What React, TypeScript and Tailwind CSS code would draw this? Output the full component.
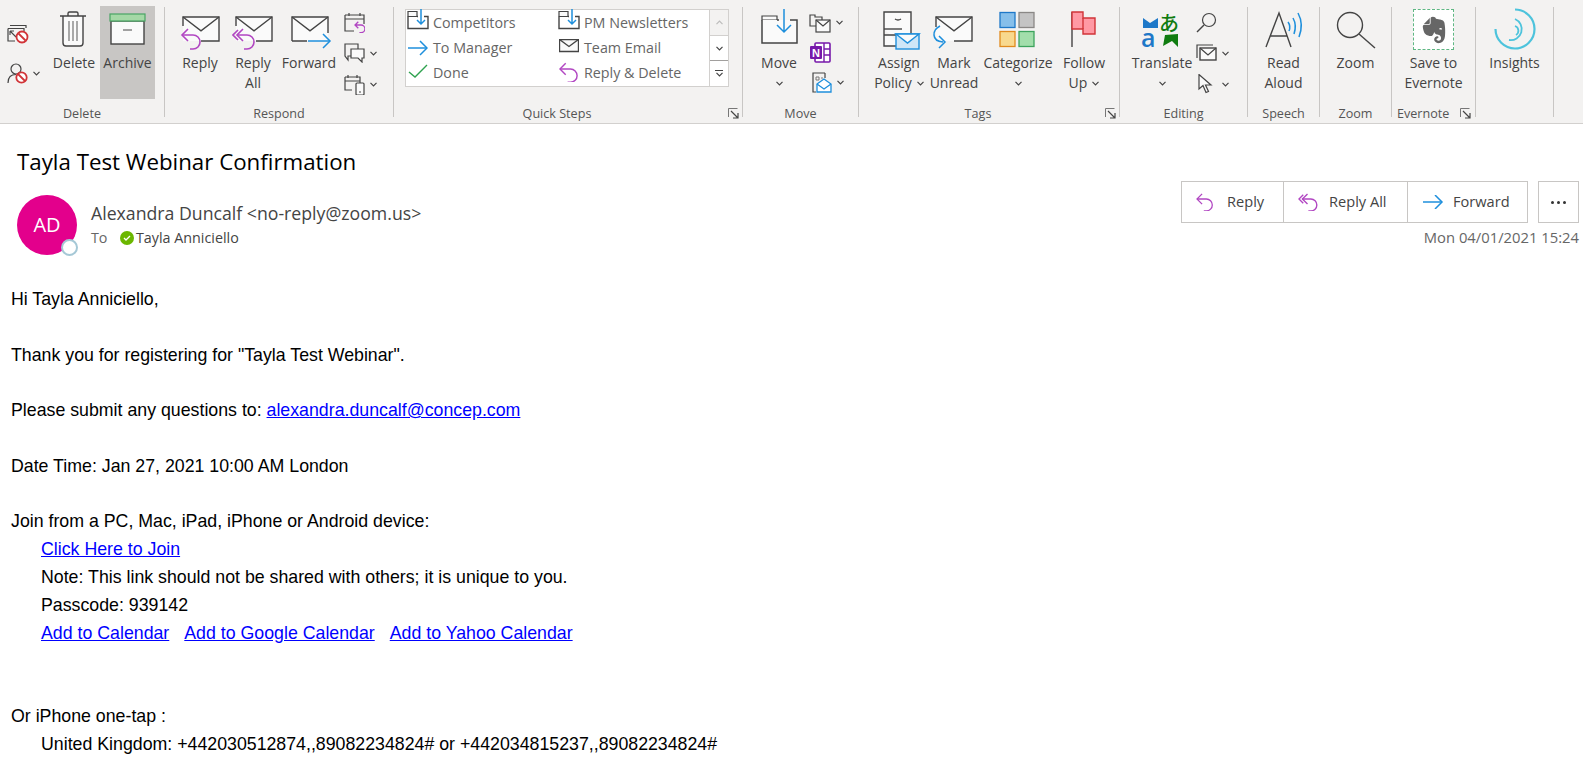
import React from 'react';
import { FaEvernote } from 'react-icons/fa';

const DARK = '#444444';
const PURPLE = '#b146c2';
const BLUE = '#1e8fdc';

const Chev = ({ className = '' }: { className?: string }) => (
  <svg width="7" height="5" viewBox="0 0 7 5" className={className}>
    <polyline points="0.5,0.8 3.5,3.8 6.5,0.8" fill="none" stroke="#444" strokeWidth="1.2" />
  </svg>
);

// shared envelope, x/y is the top left corner
const Env = ({ x, y, w = 36, h = 24, d }: { x: number; y: number; w?: number; h?: number; d?: string }) => (
  <g>
    <rect x={x} y={y} width={w} height={h} fill="#fafafa" stroke="none" />
    <path d={d || `M${x} ${y}H${x + w}V${y + h}H${x}Z`} fill="none" stroke={DARK} strokeWidth="1.4" />
    <path d={`M${x} ${y}L${x + w / 2} ${y + h * 0.58}L${x + w} ${y}`} fill="none" stroke={DARK} strokeWidth="1.4" />
  </g>
);

const Big = ({
  w,
  lines,
  icon,
  chev,
  className = '',
}: {
  w: number;
  lines: React.ReactNode[];
  icon: React.ReactNode;
  chev?: boolean;
  className?: string;
}) => (
  <div className={`flex flex-col items-center shrink-0 ${className}`} style={{ width: w }}>
    <div className="h-[46px] w-full">{icon}</div>
    {lines.map((l, i) => (
      <div key={i} className="leading-[20px] whitespace-nowrap flex items-center gap-[5px]">
        {l}
      </div>
    ))}
    {chev && (
      <div className="h-[20px] flex items-center">
        <Chev />
      </div>
    )}
  </div>
);

const Launcher = ({ className = '' }: { className?: string }) => (
  <svg width="11" height="11" viewBox="0 0 11 11" className={`absolute ${className}`}>
    <path d="M0.5 9V0.5H9.5" fill="none" stroke="#777" strokeWidth="1" />
    <path d="M3 3L9.5 9.5M10 5V10H5" fill="none" stroke="#444" strokeWidth="1.2" />
  </svg>
);

const Group = ({
  w,
  label,
  children,
  launcher,
  labelClass = 'justify-center',
}: {
  w: number;
  label: string;
  children: React.ReactNode;
  launcher?: string;
  labelClass?: string;
}) => (
  <div className="relative shrink-0 h-[110px] mt-[7px] border-r border-[#c8c6c4]" style={{ width: w }}>
    <div className="flex h-[99px] items-start">{children}</div>
    <div className={`flex h-[16px] text-[12.6px] leading-[16px] text-[#555] ${labelClass}`}>{label}</div>
    {launcher && <Launcher className={launcher} />}
  </div>
);

const SmallRow = ({ icon, chev }: { icon: React.ReactNode; chev?: boolean }) => (
  <div className="flex items-center gap-[5px] h-[20px]">
    {icon}
    {chev && <Chev />}
  </div>
);

const ReplyArrow = ({ x, y, s = 1, color = PURPLE, w = 1.6 }: { x: number; y: number; s?: number; color?: string; w?: number }) => (
  <g transform={`translate(${x} ${y}) scale(${s})`} fill="none" stroke={color} strokeWidth={w}>
    <path d="M6 -6L0 0L6 6" />
    <path d="M0 0H11a7 7 0 0 1 0 14H8" />
  </g>
);

const DoubleReply = ({ x, y, s = 1 }: { x: number; y: number; s?: number }) => (
  <g transform={`translate(${x} ${y}) scale(${s})`} fill="none" stroke={PURPLE} strokeWidth="1.6">
    <path d="M5 -5L0 0L5 5" />
    <path d="M10 -6L4 0L10 6" />
    <path d="M4 0H14a7 7 0 0 1 0 14H11" />
  </g>
);

const ForwardArrow = ({ x, y, len = 22 }: { x: number; y: number; len?: number }) => (
  <g transform={`translate(${x} ${y})`} fill="none" stroke={BLUE} strokeWidth="1.5">
    <path d={`M0 0H${len}`} />
    <path d={`M${len - 7} -7L${len} 0L${len - 7} 7`} />
  </g>
);

const FolderDown = () => (
  <svg width="22" height="24" viewBox="0 0 22 24" className="shrink-0 -mt-[6px] -ml-[1px]">
    <path d="M1 3.5H10V8.5H1Z" fill="#fafafa" stroke={DARK} strokeWidth="1.2" />
    <path d="M10 8.5H11M17 8.5H21V20.5H1V8.5" fill="none" stroke={DARK} strokeWidth="1.4" />
    <path d="M14 1V16M10 12L14 16L18 12" fill="none" stroke={BLUE} strokeWidth="1.5" />
  </svg>
);

const Row = ({ icon, label }: { icon: React.ReactNode; label: string }) => (
  <div className="flex items-center h-[25px]">
    <div className="w-[25px] h-[20px] flex items-center">{icon}</div>
    <span className="text-[14.3px] text-[#666] whitespace-nowrap">{label}</span>
  </div>
);

const Ribbon = () => (
  <div className="flex h-[124px] bg-[#f3f2f1] border-b border-[#d2d0ce] text-[14px] text-[#444] shrink-0">
    <Group w={165} label="Delete">
      <div className="w-[44px] ml-[7px] pt-[17px] flex flex-col gap-[19px] shrink-0">
        <SmallRow
          icon={
            <svg width="22" height="20" viewBox="0 0 22 20">
              <path d="M3 1.5H19V4M1 4.5H17V7" fill="none" stroke={DARK} strokeWidth="1.2" />
              <path d="M1 4.5V17H8" fill="none" stroke={DARK} strokeWidth="1.2" />
              <path d="M3 7L9 13M3 7V11M3 7H7" fill="none" stroke={DARK} strokeWidth="1.1" />
              <circle cx="15" cy="13" r="5.5" fill="#fff" stroke="#d13438" strokeWidth="1.8" />
              <path d="M11.5 9.5L18.5 16.5" stroke="#d13438" strokeWidth="1.8" />
            </svg>
          }
        />
        <SmallRow
          chev
          icon={
            <svg width="21" height="21" viewBox="0 0 21 21">
              <circle cx="9" cy="6" r="5" fill="none" stroke={DARK} strokeWidth="1.2" />
              <path d="M1 20C1 14 4 11.5 9 11.5" fill="none" stroke={DARK} strokeWidth="1.2" />
              <circle cx="14.5" cy="14.5" r="5.2" fill="#fff" stroke="#d13438" strokeWidth="1.8" />
              <path d="M11 11L18 18" stroke="#d13438" strokeWidth="1.8" />
            </svg>
          }
        />
      </div>
      <Big
        w={46}
        lines={['Delete']}
        icon={
          <svg width="46" height="46" viewBox="0 0 46 46">
            <path d="M12 9V36q0 3 3 3H29q3 0 3-3V9" fill="#fafafa" stroke={DARK} strokeWidth="1.4" />
            <path d="M9 9H35M17 9V6.5q0-1.5 1.5-1.5h7q1.5 0 1.5 1.5V9" fill="none" stroke={DARK} strokeWidth="1.4" />
            <path d="M18 14V34M22 14V34M26 14V34" stroke="#666" strokeWidth="1.1" />
          </svg>
        }
      />
      <Big
        w={55}
        className="ml-[3px] bg-[#c8c6c4] h-[93px] -mt-[1px] pt-[1px]"
        lines={['Archive']}
        icon={
          <svg width="55" height="46" viewBox="0 0 55 46">
            <rect x="11" y="14" width="33" height="23" fill="#fafafa" stroke={DARK} strokeWidth="1.4" />
            <rect x="10" y="7" width="35" height="7" fill="#a4d8a6" stroke="#4aa564" strokeWidth="1.2" />
            <path d="M23 23H32" stroke="#666" strokeWidth="1.2" />
          </svg>
        }
      />
    </Group>

    <Group w={229} label="Respond">
      <Big
        w={42}
        className="ml-[14px]"
        lines={['Reply']}
        icon={
          <svg width="42" height="46" viewBox="0 0 42 46">
            <Env x={4} y={10} d="M4 19V10H40V34H22" />
            <ReplyArrow x={3} y={28} />
          </svg>
        }
      />
      <Big
        w={42}
        className="ml-[11px]"
        lines={['Reply', 'All']}
        icon={
          <svg width="42" height="46" viewBox="0 0 42 46">
            <Env x={4} y={10} d="M4 19V10H40V34H24" />
            <DoubleReply x={1} y={28} />
          </svg>
        }
      />
      <Big
        w={60}
        className="ml-[5px]"
        lines={['Forward']}
        icon={
          <svg width="60" height="46" viewBox="0 0 60 46">
            <Env x={13} y={10} d="M13 34V10H49V26M28 34H13" />
            <ForwardArrow x={29} y={34} />
          </svg>
        }
      />
      <div className="ml-[5px] pt-[5px] flex flex-col gap-[11px]">
        <SmallRow
          icon={
            <svg width="21" height="21" viewBox="0 0 21 21">
              <path d="M1 3H20V12M10 19H1V3M1 7H20M5 1V4M16 1V4" fill="none" stroke={DARK} strokeWidth="1.2" />
              <g transform="translate(11 13) scale(0.55)">
                <path d="M6 -6L0 0L6 6M0 0H11a7 7 0 0 1 0 14H8" fill="none" stroke={PURPLE} strokeWidth="2.4" />
              </g>
            </svg>
          }
        />
        <SmallRow
          chev
          icon={
            <svg width="21" height="20" viewBox="0 0 21 20">
              <path d="M7 13H4V17L1 13V1H14V6" fill="none" stroke={DARK} strokeWidth="1.2" />
              <path d="M7 6H20V15H18V19L14 15H7Z" fill="#fafafa" stroke={DARK} strokeWidth="1.2" />
            </svg>
          }
        />
        <SmallRow
          chev
          icon={
            <svg width="21" height="21" viewBox="0 0 21 21">
              <path d="M1 3H16V9M8 16H1V3M1 7H16M4 1V4M13 1V4" fill="none" stroke={DARK} strokeWidth="1.2" />
              <rect x="12" y="9" width="8" height="12" rx="1" fill="#fafafa" stroke={DARK} strokeWidth="1.2" />
              <path d="M15 18H17" stroke={DARK} strokeWidth="1.2" />
            </svg>
          }
        />
      </div>
    </Group>

    <Group w={349} label="Quick Steps" launcher="left-[334px] top-[101px]" labelClass="justify-center pr-[22px]">
      <div className="ml-[11px] mt-[2px] w-[324px] h-[78px] flex bg-white border border-[#d2d0ce]">
        <div className="flex-1 grid grid-cols-[151px_1fr] pl-[2px] content-start">
          <Row icon={<FolderDown />} label="Competitors" />
          <Row icon={<FolderDown />} label="PM Newsletters" />
          <Row icon={<svg width="20" height="16" viewBox="0 0 20 16"><ForwardArrow x={0} y={8} len={19} /></svg>} label="To Manager" />
          <Row
            icon={
              <svg width="20" height="14" viewBox="0 0 20 14" className="-mt-[3px]">
                <Env x={0.5} y={0.5} w={19} h={12} />
              </svg>
            }
            label="Team Email"
          />
          <Row
            icon={
              <svg width="20" height="14" viewBox="0 0 20 14" className="-mt-[3px]">
                <path d="M1 8L7 13L19 1" fill="none" stroke="#2fa24f" strokeWidth="1.4" />
              </svg>
            }
            label="Done"
          />
          <Row
            icon={
              <svg width="20" height="20" viewBox="0 0 20 20" className="-mt-[2px]">
                <ReplyArrow x={1} y={7} s={0.95} w={1.5} />
              </svg>
            }
            label="Reply & Delete"
          />
        </div>
        <div className="w-[19px] flex flex-col border-l border-[#d2d0ce]">
          <div className="h-[26px] flex items-center justify-center bg-[#f3f2f1] border-b border-[#d2d0ce]">
            <Chev className="rotate-180 opacity-30" />
          </div>
          <div className="h-[25px] flex items-center justify-center border-b border-[#a19f9d]">
            <Chev />
          </div>
          <div className="flex-1 flex flex-col items-center justify-center gap-[1px]">
            <div className="w-[8px] h-[1px] bg-[#444]" />
            <Chev />
          </div>
        </div>
      </div>
    </Group>

    <Group w={116} label="Move">
      <Big
        w={60}
        className="ml-[6px]"
        lines={['Move']}
        chev
        icon={
          <svg width="60" height="46" viewBox="0 0 60 46">
            <path d="M13 9H28V13H13Z" fill="#fafafa" stroke={DARK} strokeWidth="1.2" />
            <rect x="13" y="13" width="35" height="23" fill="#fafafa" />
            <path d="M28 13H30M41 13H48V36H13V13" fill="none" stroke={DARK} strokeWidth="1.5" />
            <path d="M35 2V25M28 18L35 25L42 18" fill="none" stroke={BLUE} strokeWidth="1.5" />
          </svg>
        }
      />
      <div className="pl-[0px] pt-[5px] flex flex-col gap-[10px]">
        <SmallRow
          chev
          icon={
            <svg width="22" height="21" viewBox="0 0 22 21">
              <path d="M7 14H1V3H6V5H13V8" fill="none" stroke={DARK} strokeWidth="1.2" />
              <rect x="7" y="8" width="14" height="12" fill="#fafafa" stroke={DARK} strokeWidth="1.2" />
              <path d="M7 8L14 14L21 8" fill="none" stroke={DARK} strokeWidth="1.2" />
            </svg>
          }
        />
        <SmallRow
          icon={
            <svg width="22" height="21" viewBox="0 0 22 21">
              <rect x="6" y="1" width="15" height="19" rx="1" fill="#fff" stroke="#7719aa" strokeWidth="1.6" />
              <path d="M15 1V20M15 7H21M15 13H21" stroke="#7719aa" strokeWidth="1.4" />
              <rect x="1" y="4" width="12" height="13" rx="1" fill="#7719aa" />
              <text x="7" y="15" textAnchor="middle" fontSize="11" fontWeight="700" fill="#fff" fontFamily="Liberation Sans, sans-serif">N</text>
            </svg>
          }
        />
        <SmallRow
          chev
          icon={
            <svg width="22" height="21" viewBox="0 0 22 21" className="ml-[1px]">
              <path d="M15 1H3V20H6M15 1V6" fill="none" stroke={DARK} strokeWidth="1.2" />
              <path d="M6 5H9V8H6ZM11 6H13" fill="none" stroke="#777" strokeWidth="1" />
              <path d="M7 12L14 7L21 12V20H7Z" fill="#fff" stroke={BLUE} strokeWidth="1.3" />
              <path d="M7 12L14 17L21 12" fill="none" stroke={BLUE} strokeWidth="1.3" />
            </svg>
          }
        />
      </div>
    </Group>

    <Group w={261} label="Tags" launcher="left-[246px] top-[101px]" labelClass="justify-center pr-[22px]">
      <Big
        w={60}
        className="ml-[10px]"
        lines={[
          'Assign',
          <>
            Policy <Chev />
          </>,
        ]}
        icon={
          <svg width="60" height="46" viewBox="0 0 60 46">
            <path d="M15 5H42V28H15ZM15 22V39H33" fill="#fafafa" stroke={DARK} strokeWidth="1.4" />
            <path d="M15 22H33" stroke={DARK} strokeWidth="1.4" />
            <path d="M26 12Q29 14 32 12" fill="none" stroke={DARK} strokeWidth="1.4" />
            <rect x="27" y="27" width="23" height="15" fill="#cfe6f7" stroke={BLUE} strokeWidth="1.4" />
            <path d="M27 27L38.5 36L50 27Z" fill="#fafafa" stroke={BLUE} strokeWidth="1.4" />
          </svg>
        }
      />
      <Big
        w={50}
        lines={['Mark', 'Unread']}
        icon={
          <svg width="50" height="46" viewBox="0 0 50 46">
            <Env x={7} y={10} d="M7 20V10H43V34H25" />
            <path d="M11 19C3 23 2 34 14 35" fill="none" stroke={BLUE} strokeWidth="1.5" />
            <path d="M10 29L16 35L10 41" fill="none" stroke={BLUE} strokeWidth="1.5" />
          </svg>
        }
      />
      <Big
        w={72}
        className="ml-[3px]"
        lines={['Categorize']}
        chev
        icon={
          <svg width="72" height="46" viewBox="0 0 72 46">
            <rect x="18" y="5.5" width="15" height="15" fill="#86bfea" stroke="#1e78c8" strokeWidth="1.3" />
            <rect x="37" y="5.5" width="15" height="15" fill="#c4c4c4" stroke="#8a8886" strokeWidth="1.3" />
            <rect x="18" y="24.5" width="15" height="15" fill="#f8d98e" stroke="#e08a1e" strokeWidth="1.3" />
            <rect x="37" y="24.5" width="15" height="15" fill="#a2deab" stroke="#3da35d" strokeWidth="1.3" />
          </svg>
        }
      />
      <Big
        w={44}
        className="ml-[8px]"
        lines={[
          'Follow',
          <>
            Up <Chev />
          </>,
        ]}
        icon={
          <svg width="44" height="46" viewBox="0 0 44 46">
            <path d="M10 5V40" stroke={DARK} strokeWidth="1.4" />
            <path d="M10 5H21V11H33V27H21V22H10Z" fill="#ff99a4" stroke="#d13438" strokeWidth="1.4" />
            <path d="M21 11V22" stroke="#d13438" strokeWidth="1.4" />
          </svg>
        }
      />
    </Group>

    <Group w={128} label="Editing">
      <Big
        w={62}
        className="ml-[11px]"
        lines={['Translate']}
        chev
        icon={
          <svg width="62" height="46" viewBox="0 0 62 46">
            <text x="28" y="24" fontSize="20" fontWeight="500" fill="#107c10" fontFamily="Noto Sans CJK JP, sans-serif">あ</text>
            <text x="10" y="40" fontSize="25" fontWeight="600" fill="#1e78c8" fontFamily="Open Sans, sans-serif">a</text>
            <path d="M12 11L19 16L27 11V21H12Z" fill="#1e78c8" />
            <path d="M34 28L47 27V40L41 34L32 39Z" fill="#107c10" />
          </svg>
        }
      />
      <div className="pl-[3px] pt-[5px] flex flex-col gap-[11px]">
        <SmallRow
          icon={
            <svg width="21" height="21" viewBox="0 0 21 21">
              <circle cx="13" cy="8" r="6.5" fill="none" stroke={DARK} strokeWidth="1.2" />
              <path d="M8 13L1 20" stroke={DARK} strokeWidth="1.4" />
            </svg>
          }
        />
        <SmallRow
          chev
          icon={
            <svg width="21" height="18" viewBox="0 0 21 18">
              <path d="M1 14V1H17" fill="none" stroke={DARK} strokeWidth="1.2" />
              <rect x="4" y="4" width="16" height="12" fill="#fafafa" stroke={DARK} strokeWidth="1.4" />
              <path d="M4 4L12 11L20 4" fill="none" stroke={DARK} strokeWidth="1.2" />
            </svg>
          }
        />
        <SmallRow
          chev
          icon={
            <svg width="21" height="20" viewBox="0 0 21 20">
              <path d="M3 0.5V15L7 11.5L10 18.5L12.5 17.5L9.5 11H15Z" fill="#fafafa" stroke={DARK} strokeWidth="1.2" />
            </svg>
          }
        />
      </div>
    </Group>

    <Group w={72} label="Speech">
      <Big
        w={71}
        lines={['Read', 'Aloud']}
        icon={
          <svg width="71" height="46" viewBox="0 0 71 46">
            <path d="M18 40L31 6L43 40M22 29H39" fill="none" stroke={DARK} strokeWidth="1.4" />
            <path d="M40 15Q43 19 41 24M45 11Q49 18 46 27M50 6Q56 17 51 30" fill="none" stroke={BLUE} strokeWidth="1.5" />
          </svg>
        }
      />
    </Group>

    <Group w={72} label="Zoom">
      <Big
        w={71}
        lines={['Zoom']}
        icon={
          <svg width="71" height="46" viewBox="0 0 71 46">
            <circle cx="30" cy="18" r="12.5" fill="none" stroke={DARK} strokeWidth="1.4" />
            <path d="M39 27L55 41" stroke={DARK} strokeWidth="1.4" />
          </svg>
        }
      />
    </Group>

    <Group w={84} label="Evernote" labelClass="pl-[5px]" launcher="left-[68px] top-[101px]">
      <Big
        w={83}
        lines={['Save to', 'Evernote']}
        icon={
          <div className="ml-[21px] mt-[2px] w-[41px] h-[41px] bg-white border border-dashed border-[#5fb783] flex items-center justify-center">
            <FaEvernote size={30} color="#666666" />
          </div>
        }
      />
    </Group>

    <Group w={78} label="">
      <Big
        w={77}
        lines={['Insights']}
        icon={
          <svg width="77" height="46" viewBox="0 0 77 46">
            <g fill="none" stroke="#4dc3dc" strokeWidth="2.2">
              <path d="M39 2.5A19.5 19.5 0 1 1 19.5 22" />
              <path d="M39 12A11 11 0 0 1 33 33" strokeWidth="1.8" />
              <path d="M39 19A5 5 0 0 1 40 28" strokeWidth="1.8" />
            </g>
          </svg>
        }
      />
    </Group>
  </div>
);

const HeadBtn = ({ w, icon, label }: { w: number; icon: React.ReactNode; label: string }) => (
  <div className="flex items-center h-full pl-[14px] border-r last:border-r-0 border-[#c8c6c4]" style={{ width: w }}>
    <div className="w-[31px] flex items-center">{icon}</div>
    <span>{label}</span>
  </div>
);

const Header = () => (
  <div className="relative shrink-0 h-[136px] text-[#444]">
    <div className="pl-[17px] pt-[24px] text-[22.3px] leading-[28px] text-black">Tayla Test Webinar Confirmation</div>
    <div className="flex pl-[17px] mt-[19px]">
      <div className="relative w-[60px] h-[60px] rounded-full bg-[#e3008c] text-white text-[20px] flex items-center justify-center">
        AD
        <div className="absolute left-[44px] top-[44px] w-[17px] h-[17px] rounded-full bg-white border-[2px] border-[#a5c8d6]" />
      </div>
      <div className="ml-[14px]">
        <div className="text-[17.7px] leading-[22px] mt-[7px]">Alexandra Duncalf &lt;no-reply@zoom.us&gt;</div>
        <div className="flex items-center text-[14.3px] leading-[20px] mt-[4px]">
          <span className="w-[29px] text-[#666]">To</span>
          <span className="w-[14px] h-[14px] mr-[2px] rounded-full bg-[#6bb700] flex items-center justify-center">
            <svg width="8" height="6" viewBox="0 0 8 6">
              <path d="M1 3L3 5L7 1" fill="none" stroke="#fff" strokeWidth="1.3" />
            </svg>
          </span>
          Tayla Anniciello
        </div>
      </div>
    </div>
    <div className="absolute right-[4px] top-[57px] flex flex-col items-end text-[14.6px]">
      <div className="flex gap-[10px] h-[42px]">
        <div className="flex h-full border border-[#c8c6c4]">
          <HeadBtn
            w={102}
            label="Reply"
            icon={
              <svg width="22" height="18" viewBox="0 0 22 18">
                <ReplyArrow x={1} y={6} s={0.85} w={1.5} />
              </svg>
            }
          />
          <HeadBtn
            w={124}
            label="Reply All"
            icon={
              <svg width="22" height="18" viewBox="0 0 22 18">
                <DoubleReply x={1} y={6} s={0.85} />
              </svg>
            }
          />
          <HeadBtn
            w={119}
            label="Forward"
            icon={
              <svg width="22" height="14" viewBox="0 0 22 14">
                <ForwardArrow x={1} y={7} len={19} />
              </svg>
            }
          />
        </div>
        <div className="w-[41px] h-full border border-[#c8c6c4] flex items-center justify-center gap-[3px]">
          <span className="w-[3px] h-[3px] rounded-full bg-[#333]" />
          <span className="w-[3px] h-[3px] rounded-full bg-[#333]" />
          <span className="w-[3px] h-[3px] rounded-full bg-[#333]" />
        </div>
      </div>
      <div className="mt-[4px] text-[14.8px] leading-[20px] text-[#666]">Mon 04/01/2021 15:24</div>
    </div>
  </div>
);

const A = ({ children }: { children: React.ReactNode }) => <span className="text-[#0000ff] underline">{children}</span>;

const Body = () => (
  <div className="pl-[11px] pt-[26px] text-[17.75px] leading-[27.8px] text-black font-['Liberation_Sans',sans-serif]">
    <div>Hi Tayla Anniciello,</div>
    <br />
    <div>Thank you for registering for "Tayla Test Webinar".</div>
    <br />
    <div>
      Please submit any questions to: <A>alexandra.duncalf@concep.com</A>
    </div>
    <br />
    <div>Date Time: Jan 27, 2021 10:00 AM London</div>
    <br />
    <div>Join from a PC, Mac, iPad, iPhone or Android device:</div>
    <div className="pl-[30px]">
      <div>
        <A>Click Here to Join</A>
      </div>
      <div>Note: This link should not be shared with others; it is unique to you.</div>
      <div>Passcode: 939142</div>
      <div className="flex gap-[15px]">
        <A>Add to Calendar</A>
        <A>Add to Google Calendar</A>
        <A>Add to Yahoo Calendar</A>
      </div>
    </div>
    <br />
    <br />
    <div>Or iPhone one-tap :</div>
    <div className="pl-[30px]">United Kingdom: +442030512874,,89082234824# or +442034815237,,89082234824#</div>
  </div>
);

export default function App() {
  return (
    <div className="h-[772px] flex flex-col overflow-hidden bg-white font-['Open_Sans',sans-serif]">
      <Ribbon />
      <Header />
      <Body />
    </div>
  );
}
